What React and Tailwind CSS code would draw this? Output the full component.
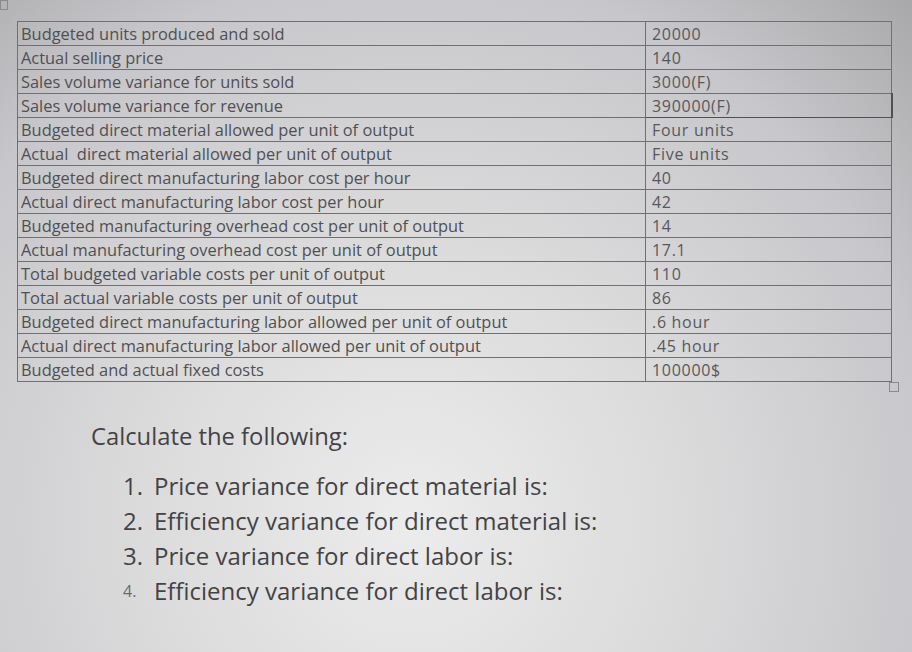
import React from 'react';

const rows = [
  ['Budgeted units produced and sold', '20000'],
  ['Actual selling price', '140'],
  ['Sales volume variance for units sold', '3000(F)'],
  ['Sales volume variance for revenue', '390000(F)'],
  ['Budgeted direct material allowed per unit of output', 'Four units'],
  ['Actual  direct material allowed per unit of output', 'Five units'],
  ['Budgeted direct manufacturing labor cost per hour', '40'],
  ['Actual direct manufacturing labor cost per hour', '42'],
  ['Budgeted manufacturing overhead cost per unit of output', '14'],
  ['Actual manufacturing overhead cost per unit of output', '17.1'],
  ['Total budgeted variable costs per unit of output', '110'],
  ['Total actual variable costs per unit of output', '86'],
  ['Budgeted direct manufacturing labor allowed per unit of output', '.6 hour'],
  ['Actual direct manufacturing labor allowed per unit of output', '.45 hour'],
  ['Budgeted and actual fixed costs', '100000$'],
];

const questions = [
  'Price variance for direct material is:',
  'Efficiency variance for direct material is:',
  'Price variance for direct labor is:',
  'Efficiency variance for direct labor is:',
];

export default function App() {
  return (
    <div
      className="relative w-[912px] h-[652px] overflow-hidden bg-[radial-gradient(ellipse_at_45%_80%,#ececec_0%,#dadadb_40%,#c7c6ca_75%,#a8a8aa_100%)] text-[#505052]"
      style={{ fontFamily: '"Open Sans", Lato, sans-serif' }}
    >
      {/* table move handle */}
      <div className="absolute left-0 top-0 w-[8px] h-[10px] border border-[#8a8a8a]" />

      <div className="pl-[17px] pt-[21px]">
        <table className="border-collapse">
          <tbody>
            {rows.map(([label, value], i) => (
              <tr key={i} className="h-[24px]">
                <td className="w-[628px] border border-[#707073] pl-[3px] text-[16.4px] leading-[22px] whitespace-pre">
                  {label}
                </td>
                <td
                  className={
                    i === 3
                      ? 'w-[246px] border border-[#505053] border-r-2 pl-[6px] text-[16px] leading-[22px] tracking-[0.7px] text-[#58585a]'
                      : 'w-[246px] border border-[#707073] pl-[6px] text-[16px] leading-[22px] tracking-[0.7px] text-[#58585a]'
                  }
                >
                  {value}
                </td>
              </tr>
            ))}
          </tbody>
        </table>
      </div>

      {/* table resize handle */}
      <div className="absolute left-[889px] top-[382px] w-[10px] h-[10px] border border-[#8a8a8a]" />

      <div className="pl-[91px] pt-[39px]">
        <div className="text-[23.8px] leading-[30px] text-[#434345]">Calculate the following:</div>
        <ol className="mt-[20px] flex flex-col gap-[5px]">
          {questions.map((q, i) => (
            <li key={i} className="flex text-[24px] leading-[30px] text-[#434345]">
              <span className={i === 3 ? 'w-[31px] pl-[32px] text-[16px] text-[#6a6a6c]' : 'w-[31px] pl-[32px]'}>
                {i + 1}.
              </span>
              <span className="ml-[31px]">{q}</span>
            </li>
          ))}
        </ol>
      </div>
    </div>
  );
}
